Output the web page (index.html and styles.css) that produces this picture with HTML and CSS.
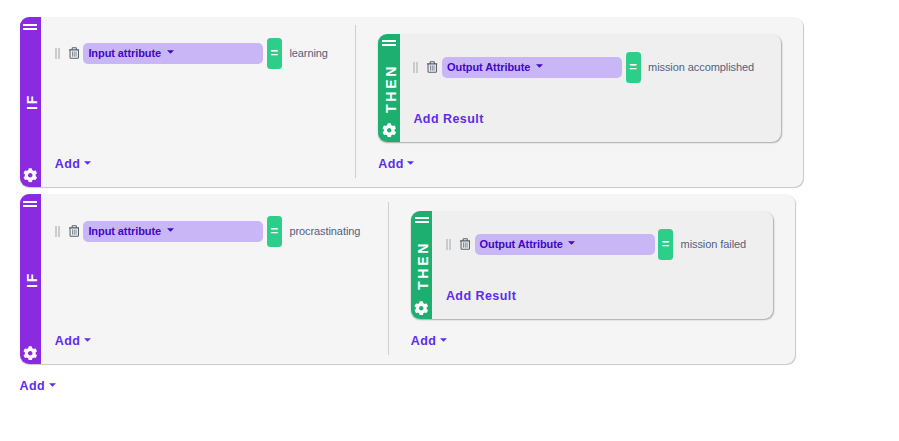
FILE: index.html
```
<!DOCTYPE html>
<html lang="en">
<head>
<meta charset="utf-8">
<title>Rules</title>
<link rel="stylesheet" href="styles.css">
</head>
<body>
<svg class="defs" width="0" height="0">
  <symbol id="gear" viewBox="0 0 512 512"><path fill="currentColor" d="M487.400 315.700l-42.600-24.600c4.300-23.200 4.300-47 0-70.200l42.600-24.600c4.900-2.800 7.100-8.600 5.500-14-11.100-35.600-30-67.800-54.700-94.600-3.800-4.100-10-5.100-14.800-2.300L380.800 110c-17.900-15.400-38.500-27.300-60.800-35.100V25.800c0-5.600-3.900-10.500-9.400-11.700-36.700-8.200-74.300-7.800-109.200 0-5.500 1.200-9.400 6.100-9.400 11.700V75c-22.200 7.900-42.800 19.800-60.800 35.100L88.700 85.500c-4.900-2.800-11-1.900-14.800 2.300-24.700 26.700-43.600 58.900-54.700 94.600-1.700 5.400.6 11.200 5.500 14L67.300 221c-4.300 23.200-4.300 47 0 70.200l-42.600 24.600c-4.900 2.800-7.100 8.600-5.500 14 11.100 35.600 30 67.800 54.700 94.600 3.800 4.100 10 5.100 14.800 2.300l42.600-24.600c17.900 15.400 38.500 27.300 60.800 35.100v49.200c0 5.600 3.900 10.500 9.400 11.700 36.700 8.200 74.300 7.800 109.200 0 5.500-1.200 9.400-6.100 9.400-11.700v-49.200c22.200-7.900 42.800-19.800 60.800-35.100l42.600 24.600c4.900 2.800 11 1.900 14.800-2.300 24.700-26.700 43.600-58.900 54.700-94.600 1.500-5.500-.7-11.300-5.600-14.100zM256 336c-44.100 0-80-35.900-80-80s35.900-80 80-80 80 35.900 80 80-35.900 80-80 80z"/></symbol>
  <symbol id="trash" viewBox="0 0 10 11"><path fill="none" stroke="currentColor" stroke-width="1" d="M0 2.500H10M3 2.300V.9Q3 .5 3.500 .5H6.500Q7 .5 7 .9V2.300M1 2.500V9.700Q1 10.500 1.800 10.500H8.200Q9 10.500 9 9.700V2.500"/><path stroke="currentColor" stroke-width=".7" d="M3.300 4V9M5 4V9M6.700 4V9"/></symbol>
  <symbol id="caret" viewBox="0 0 7 4"><path fill="currentColor" d="M0 .2H7L3.500 3.800Z"/></symbol>
</svg>
<main class="rules">
  <section class="rule rule-learning">
    <div class="rail rail-if"><i class="handle"></i><span class="rail-label">IF</span><svg class="gear"><use href="#gear"/></svg></div>
    <div class="conditions">
      <div class="row"><i class="grip"></i><svg class="trash"><use href="#trash"/></svg><div class="select">Input attribute<svg class="caret"><use href="#caret"/></svg></div><b class="operator">=</b><span class="value">learning</span></div>
      <div class="add">Add<svg class="caret"><use href="#caret"/></svg></div>
    </div>
    <div class="results">
      <div class="then">
        <div class="rail rail-then"><i class="handle"></i><span class="rail-label">THEN</span><svg class="gear"><use href="#gear"/></svg></div>
        <div class="then-body">
          <div class="row"><i class="grip"></i><svg class="trash"><use href="#trash"/></svg><div class="select">Output Attribute<svg class="caret"><use href="#caret"/></svg></div><b class="operator">=</b><span class="value">mission accomplished</span></div>
          <div class="add add-result">Add Result</div>
        </div>
      </div>
      <div class="add">Add<svg class="caret"><use href="#caret"/></svg></div>
    </div>
  </section>
  <section class="rule rule-procrastinating">
    <div class="rail rail-if"><i class="handle"></i><span class="rail-label">IF</span><svg class="gear"><use href="#gear"/></svg></div>
    <div class="conditions">
      <div class="row"><i class="grip"></i><svg class="trash"><use href="#trash"/></svg><div class="select">Input attribute<svg class="caret"><use href="#caret"/></svg></div><b class="operator">=</b><span class="value">procrastinating</span></div>
      <div class="add">Add<svg class="caret"><use href="#caret"/></svg></div>
    </div>
    <div class="results">
      <div class="then">
        <div class="rail rail-then"><i class="handle"></i><span class="rail-label">THEN</span><svg class="gear"><use href="#gear"/></svg></div>
        <div class="then-body">
          <div class="row"><i class="grip"></i><svg class="trash"><use href="#trash"/></svg><div class="select">Output Attribute<svg class="caret"><use href="#caret"/></svg></div><b class="operator">=</b><span class="value">mission failed</span></div>
          <div class="add add-result">Add Result</div>
        </div>
      </div>
      <div class="add">Add<svg class="caret"><use href="#caret"/></svg></div>
    </div>
  </section>
  <div class="add add-rule">Add<svg class="caret"><use href="#caret"/></svg></div>
</main>
</body>
</html>
```
FILE: styles.css
```
* { box-sizing: border-box; }
body { margin: 0; background: #fff; font-family: "Liberation Sans", Arial, sans-serif; font-size: 11px; overflow: hidden; }
.defs { display: block; }
.rules { padding: 16.5px 0 0 19.5px; }
.rule { display: flex; height: 170px; margin-bottom: 7.4px; background: #f5f5f5; border-radius: 9px; box-shadow: .5px 1px 1px rgba(0, 0, 0, .22); }
.rule-learning { width: 783.5px; }
.rule-procrastinating { width: 775.7px; }
.rail { display: flex; flex-direction: column; align-items: center; justify-content: space-between; flex: none; width: 21.6px; padding: 7px 0 3.500px; border-radius: 9px 0 0 9px; color: #fff; }
.rail-if { background: #8a2be2; }
.rail-then { background: #1caf70; padding: 6.500px 0 4px; }
.handle { width: 14px; height: 6px; border: solid #fff; border-width: 2px 0; }
.rail-label { writing-mode: vertical-rl; transform: rotate(180deg); font-size: 14px; font-weight: bold; line-height: 16px; letter-spacing: 1.800px; margin: 7px 0 0 3px; }
.rail-then .rail-label { letter-spacing: 2.700px; margin-top: 7.500px; }
.gear { width: 14.500px; height: 14.500px; display: block; }
.conditions { display: flex; flex-direction: column; flex: none; width: 315px; margin: 8.500px 0 9px; padding: 12.500px 0 6px 13.600px; border-right: 1.500px solid #cfcfcf; }
.rule-procrastinating .conditions { width: 347.500px; padding-top: 13.200px; }
.row { display: flex; align-items: center; flex: none; height: 31px; white-space: nowrap; }
.grip { width: 5px; height: 11px; border: solid #cbcbcb; border-width: 0 2px; }
.trash { width: 10.500px; height: 12px; margin: 0 4.200px 0 9px; color: #55606c; flex: none; }
.select { display: flex; align-items: center; flex: none; width: 180px; height: 21px; padding: 0 5px; border-radius: 5px; background: #c8b6f7; color: #4306c4; font-weight: bold; letter-spacing: -.08px; }
.caret { width: 7px; height: 4px; flex: none; margin: 0 0 2px 5.500px; }
.operator { display: flex; align-items: center; justify-content: center; flex: none; width: 15px; height: 31px; margin: 0 7.500px 0 3.500px; padding-bottom: 1.500px; border-radius: 3.500px; background: #2dce89; color: #fff; font-size: 13px; }
.value { color: #525f7f; letter-spacing: -.08px; }
.add { display: flex; align-items: center; height: 16px; margin-top: auto; color: #5e2ced; font-size: 12.500px; font-weight: bold; letter-spacing: .45px; white-space: nowrap; }
.add .caret { margin-left: 3.500px; }
.results { display: flex; flex-direction: column; flex: 1; padding: 17px 22px 15px 22.200px; }
.then { display: flex; height: 108.500px; background: #efefef; border-radius: 9px; box-shadow: .5px 1px 1.500px rgba(0, 0, 0, .3); }
.then-body { display: flex; flex-direction: column; flex: 1; padding: 18px 0 15px 13.500px; }
.add-rule { margin-top: 14.200px; }
```
